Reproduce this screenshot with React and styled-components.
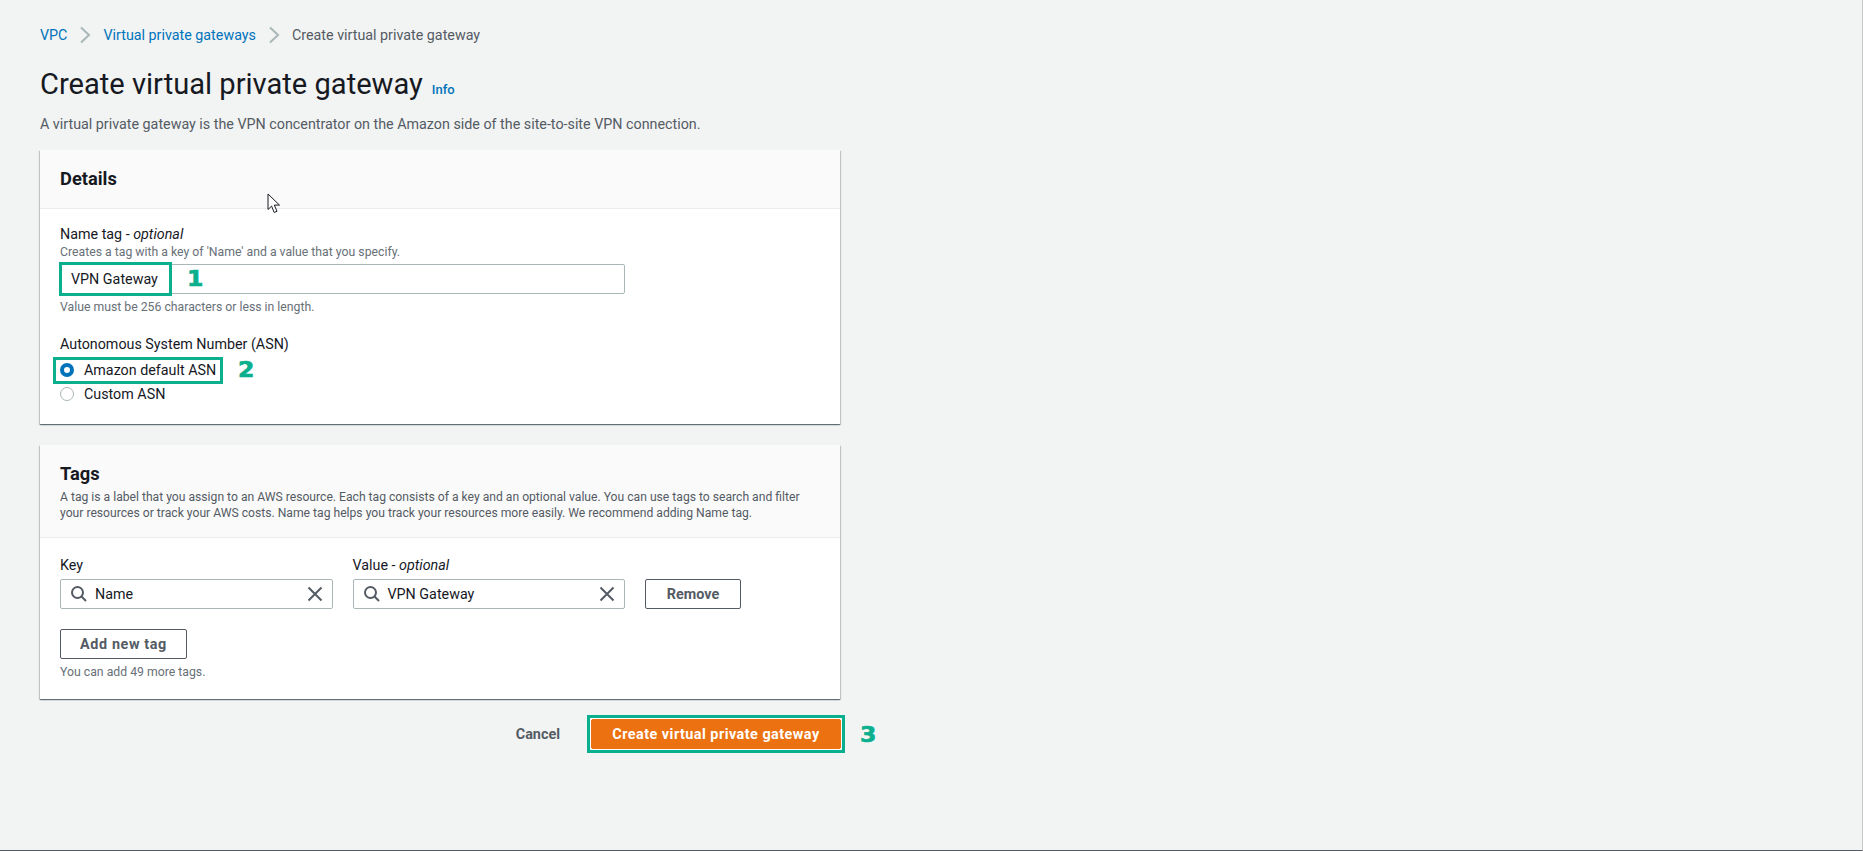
import React from "react";
import styled, { createGlobalStyle } from "styled-components";

const GlobalStyle = createGlobalStyle`
  html, body {
    margin: 0;
    padding: 0;
    background: #f2f3f3;
  }
  * {
    box-sizing: border-box;
  }
`;

const SearchIcon = () => (
  <IconSvg width="18" height="18" viewBox="0 0 18 18">
    <circle cx="7.5" cy="7.5" r="5.5" />
    <path d="M11.5 11.5L16 16" />
  </IconSvg>
);

const CloseIcon = () => (
  <IconSvg width="16" height="16" viewBox="0 0 16 16">
    <path d="M1.5 1.5L14.5 14.5M14.5 1.5L1.5 14.5" />
  </IconSvg>
);

const Chevron = () => (
  <ChevronSvg width="12" height="18" viewBox="0 0 12 18">
    <path d="M2 1.5l8 7.5-8 7.5" />
  </ChevronSvg>
);

const TagField = ({ label, optional, value }) => (
  <FieldColumn>
    <Label>
      {label}
      {optional && (
        <>
          {" - "}
          <em>optional</em>
        </>
      )}
    </Label>
    <SearchBox>
      <SearchIcon />
      <SearchValue>{value}</SearchValue>
      <CloseIcon />
    </SearchBox>
  </FieldColumn>
);

const App = () => {
  return (
    <Page>
      <GlobalStyle />
      <Breadcrumbs>
        <Crumb href="#">VPC</Crumb>
        <Chevron />
        <Crumb href="#">Virtual private gateways</Crumb>
        <Chevron />
        <CurrentCrumb>Create virtual private gateway</CurrentCrumb>
      </Breadcrumbs>

      <TitleRow>
        <Title>Create virtual private gateway</Title>
        <InfoLink href="#">Info</InfoLink>
      </TitleRow>
      <Description>
        A virtual private gateway is the VPN concentrator on the Amazon side of
        the site-to-site VPN connection.
      </Description>

      <Card>
        <CardHeader $height={59}>
          <CardTitle>Details</CardTitle>
        </CardHeader>
        <DetailsBody>
          <Label>
            Name tag - <em>optional</em>
          </Label>
          <Hint>Creates a tag with a key of 'Name' and a value that you specify.</Hint>
          <NameInput>
            VPN Gateway
            <NameHighlight />
            <NameStep>1</NameStep>
          </NameInput>
          <LengthHint>Value must be 256 characters or less in length.</LengthHint>
          <AsnLabel>Autonomous System Number (ASN)</AsnLabel>
          <RadioRow>
            <Radio $checked />
            Amazon default ASN
            <AsnHighlight />
            <AsnStep>2</AsnStep>
          </RadioRow>
          <RadioRow>
            <Radio />
            Custom ASN
          </RadioRow>
        </DetailsBody>
      </Card>

      <TagsCard>
        <CardHeader $height={93}>
          <CardTitle>Tags</CardTitle>
          <TagsText>
            A tag is a label that you assign to an AWS resource. Each tag consists of a key and an
            optional value. You can use tags to search and filter
            <br />
            your resources or track your AWS costs. Name tag helps you track your resources more
            easily. We recommend adding Name tag.
          </TagsText>
        </CardHeader>
        <TagsBody>
          <TagRow>
            <TagField label="Key" value="Name" />
            <TagField label="Value" optional value="VPN Gateway" />
            <RemoveButton>Remove</RemoveButton>
          </TagRow>
          <AddButton>Add new tag</AddButton>
          <AddHint>You can add 49 more tags.</AddHint>
        </TagsBody>
      </TagsCard>

      <Actions>
        <CancelButton>Cancel</CancelButton>
        <SubmitWrap>
          <SubmitButton>Create virtual private gateway</SubmitButton>
          <SubmitHighlight />
          <SubmitStep>3</SubmitStep>
        </SubmitWrap>
      </Actions>

      <MouseCursor width="14" height="21" viewBox="0 0 14 21">
        <path d="M1 1v15.5l3.6-3.4 2.6 6.4 2.8-1.2-2.7-6.2H12.5z" />
      </MouseCursor>
    </Page>
  );
};

const fontStack = `Roboto, "Noto Sans", sans-serif`;
const green = "#0aaf8d";

const Page = styled.div`
  position: relative;
  width: 1863px;
  height: 851px;
  padding-left: 40px;
  padding-top: 25px;
  background: #f2f3f3;
  border-bottom: 1px solid #545b64;
  border-right: 1px solid #c8caca;
  overflow: hidden;
  color: #16191f;
  font-family: ${fontStack};
  font-size: 14.3px;
`;

const Breadcrumbs = styled.nav`
  display: flex;
  align-items: center;
  height: 20px;
  gap: 12px;
  font-size: 14.3px;
`;

const Crumb = styled.a`
  color: #0073bb;
  text-decoration: none;
`;

const CurrentCrumb = styled.span`
  color: #545b64;
`;

const ChevronSvg = styled.svg`
  fill: none;
  stroke: #aab7b8;
  stroke-width: 2;
`;

const IconSvg = styled.svg`
  flex: none;
  fill: none;
  stroke: #545b64;
  stroke-width: 2;
`;

const TitleRow = styled.div`
  display: flex;
  align-items: baseline;
  gap: 9px;
  height: 40px;
  margin-top: 19px;
`;

const Title = styled.h1`
  margin: 0;
  font-size: 29.1px;
  font-weight: 400;
  line-height: 40px;
`;

const InfoLink = styled.a`
  color: #0073bb;
  font-size: 13px;
  font-weight: 500;
  text-decoration: none;
`;

const Description = styled.p`
  margin: 10px 0 0;
  height: 20px;
  line-height: 20px;
  color: #545b64;
`;

const Card = styled.section`
  width: 800px;
  height: 274px;
  margin-top: 16px;
  background: #fff;
  box-shadow: 0 1px 1px 0 rgba(0, 28, 36, 0.45), 1px 1px 1px 0 rgba(0, 28, 36, 0.15),
    -1px 1px 1px 0 rgba(0, 28, 36, 0.15);
`;

const TagsCard = styled(Card)`
  height: 254px;
  margin-top: 21px;
`;

const CardHeader = styled.header`
  height: ${(p) => p.$height}px;
  padding: 19px 20px 0;
  background: #fafafa;
  border-bottom: 1px solid #eaeded;
`;

const CardTitle = styled.h2`
  margin: 0;
  font-size: 18.3px;
  font-weight: 700;
  line-height: 20px;
`;

const TagsText = styled.p`
  margin: 5px 0 0;
  font-size: 12.15px;
  line-height: 16px;
  color: #545b64;
`;

const DetailsBody = styled.div`
  padding: 15px 20px 0;
`;

const Label = styled.label`
  display: block;
  height: 20px;
  line-height: 20px;

  em {
    font-style: italic;
  }
`;

const Hint = styled.div`
  height: 17px;
  line-height: 17px;
  font-size: 12.25px;
  color: #687078;
`;

const NameInput = styled.div`
  position: relative;
  display: flex;
  align-items: center;
  width: 565px;
  height: 30px;
  margin: 3px 0 0;
  padding-left: 10px;
  background: #fff;
  border: 1px solid #aab7b8;
  border-radius: 2px;
`;

const LengthHint = styled(Hint)`
  height: 18px;
  line-height: 18px;
  margin-top: 4px;
`;

const AsnLabel = styled(Label)`
  margin-top: 18px;
`;

const RadioRow = styled.div`
  position: relative;
  display: flex;
  align-items: center;
  gap: 10px;
  height: 20px;
  margin-top: 4px;

  ${AsnLabel} + & {
    margin-top: 6px;
  }
`;

const Radio = styled.span`
  flex: none;
  width: 14px;
  height: 14px;
  border-radius: 50%;
  background: #fff;
  border: ${(p) => (p.$checked ? "4.5px solid #0073bb" : "1.5px solid #aab7b8")};
`;

const Highlight = styled.span`
  position: absolute;
  border: 3px solid ${green};
  pointer-events: none;
`;

const NameHighlight = styled(Highlight)`
  left: -2px;
  top: -3px;
  width: 113px;
  height: 34px;
`;

const AsnHighlight = styled(Highlight)`
  left: -7px;
  top: -3px;
  width: 170px;
  height: 27px;
`;

const SubmitHighlight = styled(Highlight)`
  left: -4px;
  top: -4px;
  right: -4px;
  bottom: -4px;
`;

const Step = styled.span`
  position: absolute;
  color: ${green};
  font-family: "DejaVu Sans", sans-serif;
  font-size: 21px;
  font-weight: 700;
  line-height: 20px;
  -webkit-text-stroke: 0.7px ${green};
  transform: scaleX(1.12);
`;

const NameStep = styled(Step)`
  left: 127px;
  top: 4px;
`;

const AsnStep = styled(Step)`
  left: 179px;
  top: 0;
`;

const SubmitStep = styled(Step)`
  left: 270px;
  top: 6px;
  text-shadow: 0 0 2px #fff, 0 0 2px #fff, 0 0 2px #fff;
`;

const TagsBody = styled.div`
  padding: 17px 20px 0;
`;

const TagRow = styled.div`
  display: flex;
  align-items: flex-end;
  gap: 20px;
`;

const FieldColumn = styled.div`
  width: 272.5px;

  ${Label} {
    margin-bottom: 4px;
  }
`;

const SearchBox = styled.div`
  display: flex;
  align-items: center;
  height: 30px;
  padding: 0 9px 0 9px;
  background: #fff;
  border: 1px solid #aab7b8;
  border-radius: 2px;
`;

const SearchValue = styled.span`
  flex: 1;
  margin-left: 7px;
  color: #16191f;
`;

const OutlineButton = styled.button`
  display: block;
  height: 30px;
  padding: 0;
  background: #fff;
  border: 1px solid #545b64;
  border-radius: 2px;
  color: #545b64;
  font-family: ${fontStack};
  font-size: 14.4px;
  font-weight: 700;
`;

const RemoveButton = styled(OutlineButton)`
  width: 96px;
`;

const AddButton = styled(OutlineButton)`
  width: 127px;
  margin-top: 20px;
  letter-spacing: 0.6px;
`;

const AddHint = styled(Hint)`
  height: 18px;
  line-height: 18px;
  margin-top: 4px;
`;

const Actions = styled.div`
  display: flex;
  align-items: center;
  justify-content: flex-end;
  width: 801px;
  margin-top: 20px;
`;

const CancelButton = styled.button`
  margin-right: 31px;
  padding: 0;
  background: none;
  border: none;
  color: #545b64;
  font-family: ${fontStack};
  font-size: 14.4px;
  font-weight: 700;
`;

const SubmitWrap = styled.div`
  position: relative;
  width: 250px;
  height: 30px;
`;

const SubmitButton = styled.button`
  display: block;
  width: 100%;
  height: 100%;
  padding: 0;
  background: #ec7211;
  border: 1px solid #ec7211;
  border-radius: 2px;
  box-shadow: 0 0 0 1px #fff;
  color: #fff;
  font-family: ${fontStack};
  font-size: 14.4px;
  font-weight: 700;
  letter-spacing: 0.47px;
`;

const MouseCursor = styled.svg`
  position: absolute;
  left: 267px;
  top: 193px;
  fill: #fff;
  stroke: #16191f;
  stroke-width: 1;
`;

export default App;
